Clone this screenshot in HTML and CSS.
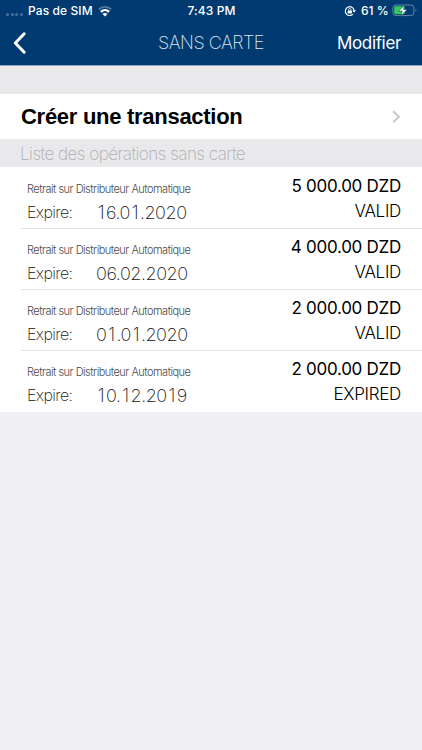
FILE: index.html
```html
<!DOCTYPE html>
<html lang="fr">
<head>
<meta charset="utf-8">
<title>Sans carte</title>
<link rel="stylesheet" href="styles.css">
</head>
<body>
<header class="top">
  <div class="status">
    <div class="carrier">
      <span class="dots"><i></i><i></i><i></i><i></i></span>
      <span class="sim">Pas de SIM</span>
      <svg class="wifi" width="14" height="12" viewBox="0 0 14 12" fill="none">
        <path d="M.8 4.4C4.3 .9 9.7 .9 13.2 4.4" stroke="#55799f" stroke-width="1.8"/>
        <path d="M2.9 6.8C5.3 4.6 8.7 4.6 11.1 6.8" stroke="#fff" stroke-width="2.3"/>
        <path d="M4.5 8.9C6 7.6 8 7.6 9.5 8.9L7 11.5Z" fill="#fff"/>
      </svg>
    </div>
    <span class="time">7:43 PM</span>
    <div class="power">
      <svg class="lock" width="12" height="12" viewBox="0 0 12 12" fill="none" stroke="#fff">
        <path d="M8.9 9.2A4.4 4.4 0 1 1 10.1 5.4" stroke-width="1.2"/>
        <path d="M8.3 5.3H11.9L10.1 7.7Z" fill="#fff" stroke="none"/>
        <rect x="3.7" y="5.4" width="4.2" height="3.1" rx=".4" fill="#fff" stroke="none"/>
        <path d="M4.6 5.6V4.7A1.2 1.2 0 0 1 7 4.7V5.6" stroke-width=".8"/>
      </svg>
      <span class="percent">61 %</span>
      <svg class="battery" width="26" height="13" viewBox="0 0 26 13">
        <rect x=".9" y="1" width="21" height="10.6" rx="3" fill="none" stroke="#6687a9"/>
        <path d="M23.6 4.6Q25.4 6.3 23.6 8Z" fill="#6687a9"/>
        <rect x="2.2" y="2.3" width="10.6" height="8" rx="1.6" fill="#35cb5b"/>
        <path d="M12.4 1.2L6.6 7.1H10.2L9.1 11.8L15.2 5.5H11.6Z" fill="#fff" stroke="#003a70" stroke-width=".6"/>
      </svg>
    </div>
  </div>
  <nav class="bar">
    <svg class="back" width="16" height="24" viewBox="0 0 16 24"><path d="M13.2 2.8L4.3 12L13.2 21.2" fill="none" stroke="#fff" stroke-width="3" stroke-linecap="round" stroke-linejoin="round"/></svg>
    <h1 class="title">SANS CARTE</h1>
    <span class="edit">Modifier</span>
  </nav>
</header>
<main>
  <div class="create">
    <span class="create-label">Créer une transaction</span>
    <svg width="10" height="14" viewBox="0 0 10 14"><path d="M2.2 1.2L8 6.7L2.2 12.2" fill="none" stroke="#c7c7cc" stroke-width="1.9"/></svg>
  </div>
  <h2 class="section"><span>Liste des opérations sans carte</span></h2>
  <ul class="list">
    <li class="item">
      <div class="info"><p class="kind">Retrait sur Distributeur Automatique</p><p class="expiry"><span class="key">Expire:</span><span class="date"><i>1</i>6.0<i>1</i>.2020</span></p></div>
      <div class="result"><p class="amount">5 000.00 DZD</p><p class="state">VALID</p></div>
    </li>
    <li class="item">
      <div class="info"><p class="kind">Retrait sur Distributeur Automatique</p><p class="expiry"><span class="key">Expire:</span><span class="date">06.02.2020</span></p></div>
      <div class="result"><p class="amount">4 000.00 DZD</p><p class="state">VALID</p></div>
    </li>
    <li class="item">
      <div class="info"><p class="kind">Retrait sur Distributeur Automatique</p><p class="expiry"><span class="key">Expire:</span><span class="date">0<i>1</i>.0<i>1</i>.2020</span></p></div>
      <div class="result"><p class="amount">2 000.00 DZD</p><p class="state">VALID</p></div>
    </li>
    <li class="item">
      <div class="info"><p class="kind">Retrait sur Distributeur Automatique</p><p class="expiry"><span class="key">Expire:</span><span class="date"><i>1</i>0.<i>1</i>2.20<i>1</i>9</span></p></div>
      <div class="result"><p class="amount">2 000.00 DZD</p><p class="state">EXPIRED</p></div>
    </li>
  </ul>
</main>
</body>
</html>
```
FILE: styles.css
```css
* { box-sizing: border-box; margin: 0; padding: 0; }
body { width: 422px; min-height: 750px; background: #efeff4; color: #000; font-family: Inter, "Liberation Sans", sans-serif; white-space: nowrap; }
.top { height: 66px; background: #003a70; border-bottom: 1px solid #8fa4bf; color: #fff; }
.status { display: grid; grid-template-columns: 1fr auto 1fr; height: 21px; padding: 0 5px 0 6px; align-items: center; font-size: 12px; line-height: 21px; font-weight: 500; }
.carrier, .power { display: flex; align-items: center; }
.power { justify-content: flex-end; }
.dots { display: flex; gap: 1.5px; width: 22px; padding-top: 7px; }
.dots i { width: 3px; height: 3px; border-radius: 50%; background: #49709a; }
.sim { width: 70px; letter-spacing: .1px; }
.time { letter-spacing: .1px; }
.lock { margin-right: 5px; }
.percent { width: 29px; margin-right: 2px; }
.power .battery { margin-right: -1px; }
.bar { display: grid; grid-template-columns: 1fr auto 1fr; align-items: center; height: 44px; padding: 0 21px; }
.back { margin-left: -10px; }
.title { font-size: 18px; font-weight: 200; letter-spacing: -.5px; line-height: 24px; color: #dfe8f1; }
.edit { justify-self: end; font-size: 17px; line-height: 24px; letter-spacing: -.35px; }
main { padding-top: 28px; background: #e9e9eb; }
.create { display: flex; justify-content: space-between; align-items: center; height: 45px; padding: 0 21px 0 21px; background: #fff; }
.create-label { font-family: "Liberation Sans", Arial, sans-serif; font-size: 22px; font-weight: 700; letter-spacing: -.28px; }
.section { height: 28px; padding-left: 20px; font-size: 17px; line-height: 30px; font-weight: 200; color: #adadb0; letter-spacing: -.5px; }
.list { padding-top: 1px; list-style: none; background: #fff; }
.item { display: flex; justify-content: space-between; height: 61px; margin-left: 21px; padding: 7px 21px 0 6px; border-bottom: 1px solid #e3e3e5; }
.item:last-child { border-bottom: 0; }
.kind { padding-top: 6px; font-size: 11px; line-height: 16px; font-weight: 300; letter-spacing: -.5px; color: #4a4a4a; }
.expiry { display: flex; font-weight: 200; line-height: 31px; color: #111; }
.key { width: 69px; font-size: 16px; letter-spacing: -.6px; }
.date { font-size: 18px; letter-spacing: -.45px; }
.date i { display: inline-block; width: 10px; font-style: normal; text-align: center; }
.result { text-align: right; }
.amount { font-size: 17px; line-height: 22px; letter-spacing: -.27px; }
.state { font-size: 17px; line-height: 28px; font-weight: 300; letter-spacing: -.3px; }
```
